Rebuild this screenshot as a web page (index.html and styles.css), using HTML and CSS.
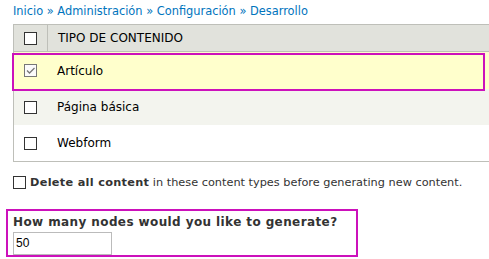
FILE: index.html
```html
<!DOCTYPE html>
<html>
<head>
<meta charset="utf-8">
<link rel="stylesheet" href="styles.css">
</head>
<body>
<div class="breadcrumb"><a>Inicio</a> » <a>Administración</a> » <a>Configuración</a> » <a>Desarrollo</a></div>
<div class="table-wrap">
  <div class="table">
    <div class="row head"><div class="c1"><span class="cb"></span></div><div class="c2">TIPO DE CONTENIDO</div></div>
    <div class="row sel"><div class="c1"><span class="cb checked"><svg width="11" height="11" viewBox="0 0 11 11"><path d="M2 5.5 L4.5 8 L9.5 3" fill="none" stroke="#777" stroke-width="1.3"/></svg></span></div><div class="c2">Artículo</div></div>
    <div class="row even"><div class="c1"><span class="cb"></span></div><div class="c2">Página básica</div></div>
    <div class="row odd"><div class="c1"><span class="cb"></span></div><div class="c2">Webform</div></div>
  </div>
  <div class="hl hl-row"></div>
</div>
<div class="delete"><span class="cb"></span><span><b>Delete all content</b> in these content types before generating new content.</span></div>
<div class="field">
  <label>How many nodes would you like to generate?</label>
  <div class="input">50</div>
  <div class="hl hl-field"></div>
</div>
</body>
</html>
```
FILE: styles.css
```css
html, body { margin: 0; padding: 0; background: #fff; }
body { font-family: "DejaVu Sans", Verdana, sans-serif; font-size: 12px; color: #333; width: 489px; height: 259px; overflow: hidden; }
.breadcrumb { padding: 4px 0 0 13px; height: 24px; box-sizing: border-box; font-size: 11.4px; color: #0074bd; line-height: 14px; }
.breadcrumb a { color: #0074bd; }
.table-wrap { position: relative; margin-left: 13px; }
.table { border-left: 1px solid #bebfb9; border-bottom: 1px solid #bebfb9; }
.row { display: flex; align-items: center; height: 36px; color: #000; }
.row.head { background: #e1e2dc; border-top: 1px solid #bebfb9; border-bottom: 1px solid #bebfb9; height: 26px; }
.row.sel { background: #ffffcc; height: 37px; }
.row.even { background: #f3f4ee; }
.row.odd { background: #fff; }
.c1 { width: 33px; height: 100%; display: flex; align-items: center; padding-left: 10px; box-sizing: border-box; }
.head .c1 { border-right: 1px solid #bebfb9; width: 34px; }
.c2 { padding-left: 10px; }
.head .c2 { padding-left: 10px; }
.cb { display: inline-block; width: 13px; height: 13px; box-sizing: border-box; border: 1px solid #333; background: #fff; position: relative; }
.cb.checked { border-color: #777; background: #fbfbfb; }
.cb svg { position: absolute; left: 0; top: 0; }
.hl { position: absolute; border: 2px solid #cc11bb; box-sizing: border-box; pointer-events: none; }
.hl-row { left: -1px; top: 29px; width: 473px; height: 38px; }
.delete { display: flex; align-items: center; gap: 4px; margin: 14px 0 0 13px; font-size: 11.3px; color: #333; }
.delete .cb { border-color: #333; }
.delete b { letter-spacing: 0.3px; }
.field { position: relative; margin: 26px 0 0 13px; }
.field label { display: block; font-weight: bold; font-size: 12px; color: #333; letter-spacing: 0.4px; line-height: 15px; }
.input { margin-top: 2px; width: 99px; height: 23px; box-sizing: border-box; border: 1px solid #bbb; font-family: "Liberation Sans", Arial, sans-serif; font-size: 12px; color: #000; padding: 3px 0 0 2px; }
.hl-field { left: -7px; top: -6px; width: 352px; height: 48px; }
```
